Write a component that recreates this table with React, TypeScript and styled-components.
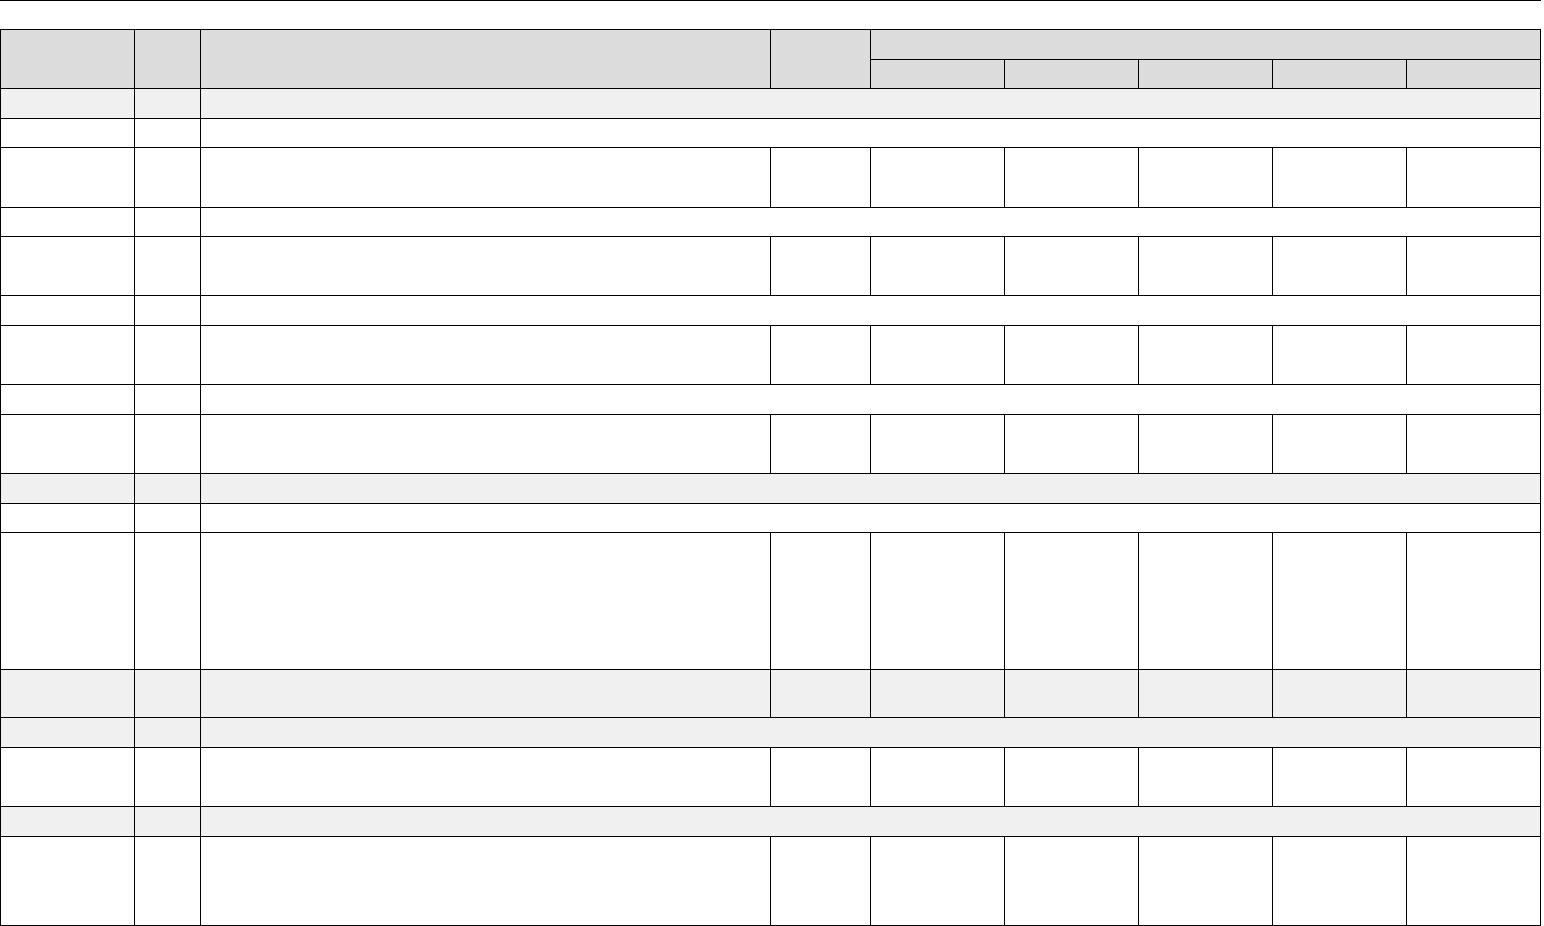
import styled, { createGlobalStyle } from "styled-components";

const GlobalStyle = createGlobalStyle`
  html, body {
    margin: 0;
    padding: 0;
    background: #fff;
    font-family: "Liberation Sans", Arial, sans-serif;
    font-size: 13px;
  }
`;

const Page = styled.div`
  width: 1541px;
`;

const Rule = styled.div`
  height: 0;
  border-top: 1px solid #000;
  margin-bottom: 28px;
`;

type RowKind = "band" | "full";
type Tone = "white" | "grey";

const rows: { kind: RowKind; tone: Tone; height: number }[] = [
  { kind: "band", tone: "grey", height: 29 },
  { kind: "band", tone: "white", height: 28 },
  { kind: "full", tone: "white", height: 59 },
  { kind: "band", tone: "white", height: 28 },
  { kind: "full", tone: "white", height: 58 },
  { kind: "band", tone: "white", height: 29 },
  { kind: "full", tone: "white", height: 58 },
  { kind: "band", tone: "white", height: 29 },
  { kind: "full", tone: "white", height: 58 },
  { kind: "band", tone: "grey", height: 29 },
  { kind: "band", tone: "white", height: 28 },
  { kind: "full", tone: "white", height: 136 },
  { kind: "full", tone: "grey", height: 47 },
  { kind: "band", tone: "grey", height: 29 },
  { kind: "full", tone: "white", height: 58 },
  { kind: "band", tone: "grey", height: 29 },
  { kind: "full", tone: "white", height: 88 },
];

const Table = styled.div<{ $rows: string }>`
  display: grid;
  grid-template-columns: 133px 65px 569px 99px repeat(5, 133px);
  grid-template-rows: 29px 28px ${(p) => p.$rows};
  gap: 1px;
  padding: 1px;
  background: #000;
`;

const HeadCell = styled.div<{ $rowSpan?: number; $colSpan?: number }>`
  background: #dcdcdc;
  grid-row: span ${(p) => p.$rowSpan ?? 1};
  grid-column: span ${(p) => p.$colSpan ?? 1};
`;

const Cell = styled.div<{ $tone: Tone; $wide?: boolean }>`
  background: ${(p) => (p.$tone === "grey" ? "#f0f0f0" : "#fff")};
  grid-column: ${(p) => (p.$wide ? "span 7" : "span 1")};
`;

export default function App() {
  return (
    <Page>
      <GlobalStyle />
      <Rule />
      <Table $rows={rows.map((r) => `${r.height}px`).join(" ")}>
        <HeadCell $rowSpan={2} />
        <HeadCell $rowSpan={2} />
        <HeadCell $rowSpan={2} />
        <HeadCell $rowSpan={2} />
        <HeadCell $colSpan={5} />
        {[0, 1, 2, 3, 4].map((i) => (
          <HeadCell key={`sub-${i}`} />
        ))}
        {rows.map((row, r) =>
          row.kind === "band" ? (
            [
              <Cell key={`${r}-a`} $tone={row.tone} />,
              <Cell key={`${r}-b`} $tone={row.tone} />,
              <Cell key={`${r}-c`} $tone={row.tone} $wide />,
            ]
          ) : (
            Array.from({ length: 9 }, (_, c) => (
              <Cell key={`${r}-${c}`} $tone={row.tone} />
            ))
          )
        )}
      </Table>
    </Page>
  );
}
